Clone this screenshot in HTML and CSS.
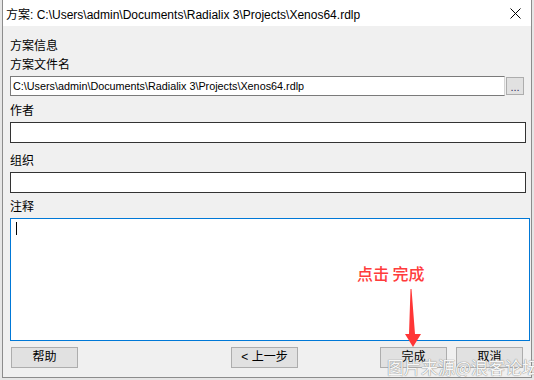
FILE: index.html
```html
<!DOCTYPE html>
<html lang="zh-CN">
<head>
  <meta charset="UTF-8">
  <title>方案</title>
  <link rel="stylesheet" href="styles.css">
</head>
<body>
<div class="dialog">
  <div class="titlebar">
    <span class="title">方案: C:\Users\admin\Documents\Radialix 3\Projects\Xenos64.rdlp</span>
    <svg class="close" width="11" height="11" viewBox="0 0 11 11">
      <path d="M0.5 0.5 L10.5 10.5 M10.5 0.5 L0.5 10.5" stroke="#000" stroke-width="1" fill="none"/>
    </svg>
  </div>

  <div class="content">
    <div class="group-title">方案信息</div>

    <div class="field field-path">
      <div class="label">方案文件名</div>
      <div class="path-row">
        <div class="path">C:\Users\admin\Documents\Radialix 3\Projects\Xenos64.rdlp</div>
        <div class="browse">...</div>
      </div>
    </div>

    <div class="field field-author">
      <div class="label">作者</div>
      <div class="textbox"></div>
    </div>

    <div class="field field-org">
      <div class="label">组织</div>
      <div class="textbox"></div>
    </div>

    <div class="field field-notes">
      <div class="label">注释</div>
      <div class="notes"><span class="caret"></span></div>
    </div>

    <div class="buttons">
      <div class="btn btn-help">帮助</div>
      <div class="btn btn-back">&lt; 上一步</div>
      <div class="btn btn-finish">完成</div>
      <div class="btn btn-cancel">取消</div>
    </div>
  </div>

  <div class="hint">点击 完成</div>
  <svg class="arrow" width="20" height="62" viewBox="0 0 20 62">
    <polygon points="5.5,0 6.5,0 10,45 16,45 8,58 0,45 4,45" fill="#ff3636"/>
  </svg>
  <div class="watermark">图片来源@浪客论坛</div>
</div>
</body>
</html>
```

FILE: styles.css
```css
body {
  margin: 0;
  background: #e6e6e6;
  font-family: "Liberation Sans", "Noto Sans CJK SC", sans-serif;
  font-size: 12px;
  color: #000;
}
.dialog {
  position: relative;
  margin-left: 2px;
  width: 530px;
  height: 378px;
  box-sizing: border-box;
  border: 1px solid #8c8c8c;
  border-top: none;
  background: #f0f0f0;
}
.titlebar {
  height: 26px;
  background: #fff;
  display: flex;
  align-items: center;
  padding: 1px 10px 0 3px;
  box-sizing: border-box;
}
.title {
  flex: 1;
  white-space: nowrap;
}
.content {
  padding-left: 7px;
}
.group-title, .label {
  line-height: 16px;
}
.group-title {
  margin-top: 12px;
}
.field {
  margin-top: 7px;
}
.field-path {
  margin-top: 3px;
}
.field-org {
  margin-top: 10px;
}
.field-notes {
  margin-top: 6px;
}
.label {
  margin-bottom: 3px;
}
.path-row {
  display: flex;
  align-items: center;
  margin-top: 2px;
}
.path {
  width: 495px;
  height: 20px;
  box-sizing: border-box;
  border: 1px solid #7a7a7a;
  border-right-color: #d4d4d4;
  background: #fff;
  padding-left: 2px;
  font-size: 10.8px;
  line-height: 18px;
  white-space: nowrap;
}
.browse {
  width: 18px;
  height: 18px;
  box-sizing: border-box;
  margin-left: 1px;
  border: 1px solid #adadad;
  background: #e1e1e1;
  font-size: 11px;
  line-height: 18px;
  text-align: center;
  color: #303060;
}
.textbox {
  width: 516px;
  height: 21px;
  box-sizing: border-box;
  border: 1px solid #333;
  background: #fff;
}
.notes {
  width: 520px;
  height: 123px;
  box-sizing: border-box;
  border: 1px solid #0078d7;
  background: #fff;
  padding: 3px 0 0 5px;
}
.caret {
  display: block;
  width: 1px;
  height: 13px;
  background: #000;
}
.buttons {
  display: flex;
  margin-top: 6px;
}
.btn {
  width: 67px;
  height: 21px;
  box-sizing: border-box;
  border: 1px solid #adadad;
  background: #e1e1e1;
  text-align: center;
  line-height: 19px;
}
.btn-help {
  margin-left: 1px;
}
.btn-back {
  margin-left: 153px;
}
.btn-finish {
  margin-left: 82px;
}
.btn-cancel {
  margin-left: 9px;
}
.hint {
  position: absolute;
  left: 354px;
  top: 261px;
  font-family: "Noto Sans CJK SC", sans-serif;
  font-size: 16px;
  font-weight: 500;
  color: #ff3c3c;
  white-space: nowrap;
}
.arrow {
  position: absolute;
  left: 402px;
  top: 289px;
}
.watermark {
  position: absolute;
  left: 384px;
  top: 354px;
  font-family: "Noto Sans CJK SC", sans-serif;
  font-size: 17px;
  color: rgba(255, 255, 255, 0.95);
  text-shadow: 0 0 1px #8a8a8a, 0 0 1px #8a8a8a;
  white-space: nowrap;
}
```
